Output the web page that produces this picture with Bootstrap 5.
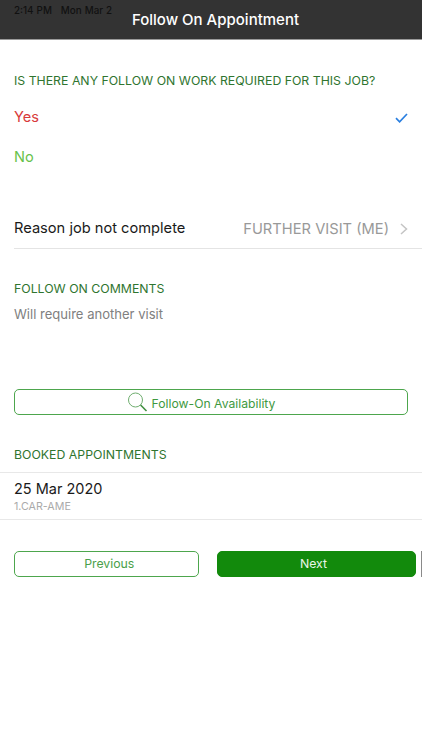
<!DOCTYPE html>
<html lang="en">
<head>
<meta charset="utf-8">
<title>Follow On Appointment</title>
<link rel="stylesheet" href="https://cdn.jsdelivr.net/npm/bootstrap@5.3.0/dist/css/bootstrap.min.css">
<style>
html,body{background:#fff;height:100%;overflow:hidden}
body{font-family:Inter,"Liberation Sans",sans-serif;color:#1a1a1a}
.app-head{height:40px;background:#333;border-bottom:1px solid #9a9a9a;color:#fff;font-size:15px;font-weight:500;padding:1px 0 0 9px}
.app-status{position:absolute;left:14px;top:5px;font-size:9.8px;line-height:12px;color:#111;word-spacing:.5px}
.app-status span+span{margin-left:9px}
.sec-label{font-size:12.3px;line-height:16px;color:#2f752f;padding:0 14px}
.q-label{margin-top:33px}
.opt-row{height:40px;padding:1px 14px 0;font-size:14.6px}
.opt-yes{color:#d83a3a;margin-top:8px}
.opt-no{color:#67c24a}
.reason-row{margin-top:32px;margin-left:14px;height:40px;border-bottom:1px solid #e4e4e4;padding:1px 14px 0 0;font-size:14.65px}
.reason-val{color:#999;font-size:14.7px;margin-right:3px}
.comments-label{margin-top:32px}
.comments-text{padding:0 14px;margin-top:8px;height:84px;font-size:13.05px;line-height:18px;color:#808080}
.btn-wide{margin:0 14px;width:394px;height:26px;padding:0 20px 0 0;border:1px solid #4da64d;border-radius:5px;color:#3f993f;font-size:12.2px;background:#fff}
.btn-wide span{padding-top:4px}
.booked-label{margin-top:32px}
.booked-list{margin-top:9px;height:48px;border-top:1px solid #e8e8e8;border-bottom:1px solid #e8e8e8;padding:6px 14px 0}
.booked-date{font-size:14.5px;line-height:20px;color:#1a1a1a}
.booked-sub{font-size:10.7px;line-height:13px;color:#aaa;margin-top:1px}
.foot-row{margin-top:31px;height:26px;padding-left:14px}
.btn-prev,.btn-next{height:26px;border-radius:5px;font-size:12.3px}
.btn-prev{width:184.5px;padding:0 0 0 6px;border:1px solid #4da64d;color:#4a9f4a;background:#fff}
.btn-next{width:199px;padding:0 6px 0 0;margin-left:18.5px;background:#128a0c;border:1px solid #128a0c;color:#e8f5e8}
.sliver{width:1px;height:26px;margin-left:5px;background:#8a8a8a}
</style>
</head>
<body>
<header class="app-head position-relative d-flex align-items-center justify-content-center">
  <div class="app-status"><span>2:14 PM</span><span>Mon Mar 2</span></div>
  <div>Follow On Appointment</div>
</header>
<main>
  <div class="sec-label q-label">IS THERE ANY FOLLOW ON WORK REQUIRED FOR THIS JOB?</div>
  <div class="opt-row opt-yes d-flex align-items-center justify-content-between">
    <span>Yes</span>
    <svg width="13" height="10" viewBox="0 0 13 10" fill="none" aria-hidden="true"><path d="M1 5.2 4.6 8.8 12 1" stroke="#2a7fe0" stroke-width="1.7"/></svg>
  </div>
  <div class="opt-row opt-no d-flex align-items-center">No</div>
  <div class="reason-row d-flex align-items-center justify-content-between">
    <span>Reason job not complete</span>
    <span class="d-flex align-items-center gap-2">
      <span class="reason-val">FURTHER VISIT (ME)</span>
      <svg width="8" height="12" viewBox="0 0 8 12" fill="none" aria-hidden="true"><path d="M1 1 6.5 6 1 11" stroke="#c4c4c4" stroke-width="1.5"/></svg>
    </span>
  </div>
  <div class="sec-label comments-label">FOLLOW ON COMMENTS</div>
  <div class="comments-text">Will require another visit</div>
  <button type="button" class="btn btn-wide d-flex align-items-center justify-content-center">
    <svg width="21" height="21" viewBox="0 0 21 21" fill="none" aria-hidden="true" class="me-1"><circle cx="8.5" cy="8" r="7" stroke="#6fae6f" stroke-width="1"/><path d="M13.6 13 19.5 19" stroke="#3f8f3f" stroke-width="1.6"/></svg>
    <span>Follow-On Availability</span>
  </button>
  <div class="sec-label booked-label">BOOKED APPOINTMENTS</div>
  <div class="booked-list">
    <div class="booked-date">25 Mar 2020</div>
    <div class="booked-sub">1.CAR-AME</div>
  </div>
  <div class="foot-row d-flex align-items-center">
    <button type="button" class="btn btn-prev">Previous</button>
    <button type="button" class="btn btn-next">Next</button>
    <div class="sliver"></div>
  </div>
</main>
<script src="https://cdn.jsdelivr.net/npm/bootstrap@5.3.0/dist/js/bootstrap.bundle.min.js"></script>
</body>
</html>
